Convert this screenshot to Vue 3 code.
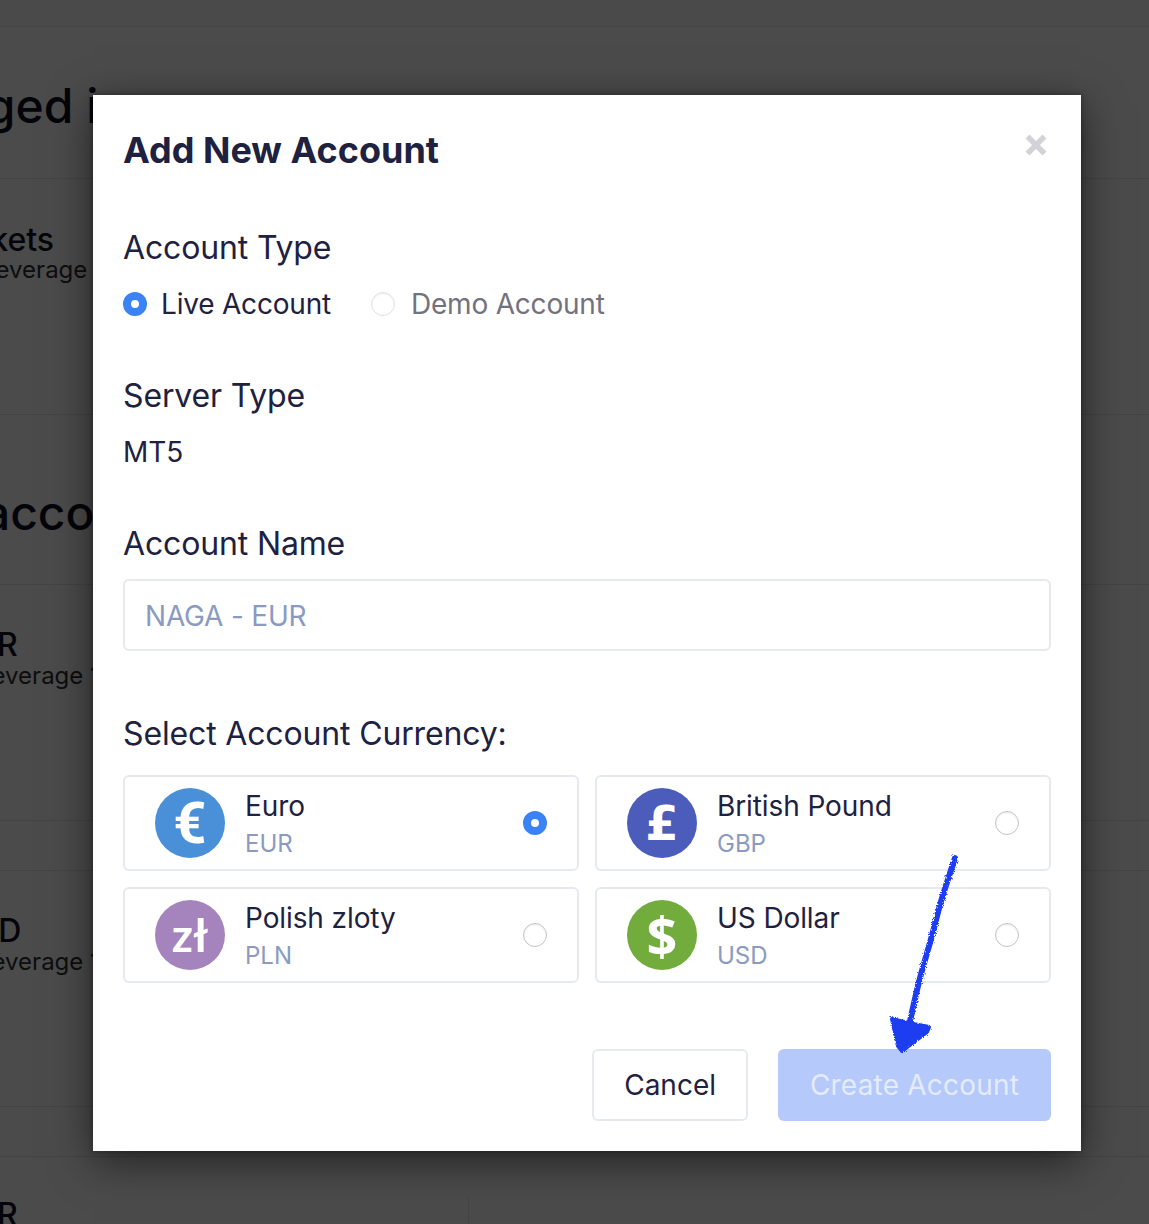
<script setup>
const currencies = [
  { name: "Euro", code: "EUR", symbol: "€", color: "#4a90d9", cls: "sym-euro", selected: true },
  { name: "British Pound", code: "GBP", symbol: "£", color: "#4c5cba", cls: "sym-pound", selected: false },
  { name: "Polish zloty", code: "PLN", symbol: "zł", color: "#a583bd", cls: "sym-zloty", selected: false },
  { name: "US Dollar", code: "USD", symbol: "$", color: "#71ac3c", cls: "sym-dollar", selected: false },
];
</script>

<template>
  <div class="page">
    <!-- page behind the overlay -->
    <div class="bg">
      <div class="topbar"></div>
      <div class="bg-row heading-row"><span class="bg-heading heading-a">Engaged in</span></div>
      <div class="bg-row account-row first">
        <div class="bg-title title-kets">Markets</div>
        <div class="bg-sub sub-a">Leverage</div>
      </div>
      <div class="bg-row heading-row two"><span class="bg-heading heading-b">Live acco</span></div>
      <div class="bg-row account-row">
        <div class="bg-title title-r">EUR</div>
        <div class="bg-sub sub-b">Leverage 1</div>
      </div>
      <div class="bg-row spacer"></div>
      <div class="bg-row account-row">
        <div class="bg-title title-r">USD</div>
        <div class="bg-sub sub-b">Leverage 1</div>
      </div>
      <div class="bg-row spacer"></div>
      <div class="last-card">
        <div class="bg-title title-r">EUR</div>
        <div class="dots"><i></i><i></i><i></i></div>
      </div>
    </div>

    <div class="overlay"></div>

    <div class="modal">
      <div class="modal-head">
        <h2>Add New Account</h2>
        <svg class="close" width="22" height="22" viewBox="0 0 22 22">
          <path d="M2.5 2.5l17 17M19.5 2.5l-17 17" stroke="#d2d2d8" stroke-width="5.5" fill="none" />
        </svg>
      </div>

      <div class="label type-label">Account Type</div>
      <div class="radios">
        <label class="radio-item">
          <span class="radio on"></span>
          <span>Live Account</span>
        </label>
        <label class="radio-item demo">
          <span class="radio off faint"></span>
          <span>Demo Account</span>
        </label>
      </div>

      <div class="label server-label">Server Type</div>
      <div class="server-value">MT5</div>

      <div class="label name-label">Account Name</div>
      <div class="input">NAGA - EUR</div>

      <div class="label currency-label">Select Account Currency:</div>
      <div class="currency-grid">
        <div v-for="c in currencies" :key="c.code" class="currency">
          <span class="coin" :class="c.cls" :style="{ background: c.color }">{{ c.symbol }}</span>
          <div class="currency-text">
            <div class="currency-name">{{ c.name }}</div>
            <div class="currency-code">{{ c.code }}</div>
          </div>
          <span class="radio" :class="c.selected ? 'on' : 'off'"></span>
        </div>
      </div>

      <div class="actions">
        <button class="btn cancel">Cancel</button>
        <button class="btn create">Create Account</button>
      </div>
    </div>

    <!-- hand drawn arrow on top of the screenshot -->
    <svg class="scribble" width="110" height="220" viewBox="0 0 110 220">
      <defs>
        <filter id="rough" x="-20%" y="-20%" width="140%" height="140%">
          <feTurbulence type="fractalNoise" baseFrequency="0.9" numOctaves="2" seed="4" />
          <feDisplacementMap in="SourceGraphic" scale="3.5" />
        </filter>
      </defs>
      <g filter="url(#rough)" fill="#1b3cf2" stroke="#1b3cf2" stroke-linejoin="round" stroke-linecap="round">
        <path d="M75 8C68 30 62 45 56 70C50 95 42 118 37 140C33 158 30 170 27 186" fill="none" stroke-width="6" />
        <path d="M12 169L28 173L49 177L47 182L22 201L18 196Z" stroke-width="4" />
      </g>
    </svg>
  </div>
</template>

<style>
html,
body {
  margin: 0;
  background: #4f4f4f;
}
</style>

<style scoped>
.page {
  position: relative;
  width: 1149px;
  height: 1224px;
  overflow: hidden;
  font-family: Inter, "Liberation Sans", sans-serif;
  color: #1e2140;
}

.bg {
  background: #f3f3f3;
  height: 100%;
  color: #0f1120;
}

.topbar {
  height: 26px;
  background: #edeff3;
  border-bottom: 1px solid #dadbdd;
}

.bg-row {
  border-bottom: 1px solid #dadbdd;
  overflow: hidden;
  white-space: nowrap;
}

.heading-row {
  height: 151px;
}

.heading-row.two {
  height: 169px;
}

.account-row {
  height: 235px;
}

.spacer {
  height: 49px;
}

.bg-heading {
  display: block;
  font-size: 48px;
  font-weight: 500;
  line-height: 56px;
}

.heading-a {
  margin: 51px 0 0 -129px;
}

.heading-b {
  margin: 70px 0 0 -124px;
}

.bg-title {
  font-size: 32px;
  font-weight: 500;
  line-height: 36px;
}

.bg-sub {
  font-size: 24px;
  line-height: 30px;
  color: #2e2e32;
}

.title-kets {
  margin: 43px 0 0 -70px;
}

.sub-a {
  margin: -3px 0 0 -18px;
}

.title-r {
  margin: 42px 0 0 -46px;
}

.sub-b {
  margin: -2px 0 0 -22px;
}

.last-card {
  position: relative;
  width: 468px;
  height: 68px;
  border-right: 1px solid #dadbdd;
  white-space: nowrap;
}

.last-card .title-r {
  margin-top: 40px;
}

.dots {
  position: absolute;
  left: 359px;
  top: 61px;
  display: flex;
  gap: 3px;
}

.dots i {
  width: 7px;
  height: 7px;
  border-radius: 50%;
  background: #2c3050;
}

.overlay {
  position: absolute;
  inset: 0;
  background: rgba(0, 0, 0, 0.69);
}

.modal {
  position: absolute;
  left: 93px;
  top: 95px;
  width: 988px;
  height: 1056px;
  box-sizing: border-box;
  padding: 0 30px 30px;
  background: #fff;
  box-shadow:
    0 10px 40px rgba(0, 0, 0, 0.55),
    0 0 6px rgba(0, 0, 0, 0.35);
}

.modal-head {
  display: flex;
  justify-content: space-between;
  height: 110px;
}

h2 {
  margin: 33px 0 0;
  font-size: 36px;
  line-height: 44px;
  font-weight: 700;
}

.close {
  margin: 39px 4px 0 0;
}

.label {
  font-size: 32px;
  letter-spacing: -0.15px;
  line-height: 36px;
}

.type-label {
  margin-top: 25px;
}

.radios {
  display: flex;
  gap: 40px;
  margin-top: 20px;
  font-size: 28px;
  letter-spacing: -0.2px;
  line-height: 36px;
}

.radio-item {
  display: flex;
  align-items: center;
  gap: 14px;
}

.demo {
  gap: 16px;
  color: #72727f;
}

.radio {
  flex: none;
  box-sizing: border-box;
  display: block;
  width: 24px;
  height: 24px;
  border-radius: 50%;
}

.radio.on {
  border: 8px solid #3b82f6;
  background: #fff;
}

.radio.off {
  border: 1px solid #c4c4c8;
  box-shadow: inset 0 1px 2px rgba(0, 0, 0, 0.08);
}

.radio.off.faint {
  border-color: #e2e2e5;
}

.server-label {
  margin-top: 56px;
}

.server-value {
  margin-top: 20px;
  font-size: 28px;
  line-height: 36px;
}

.name-label {
  margin-top: 56px;
}

.input {
  margin-top: 17px;
  box-sizing: border-box;
  height: 72px;
  padding-left: 20px;
  border: 2px solid #e6e9ee;
  border-radius: 6px;
  color: #8a9ac2;
  font-size: 28px;
  letter-spacing: -0.2px;
  line-height: 70px;
}

.currency-label {
  margin-top: 65px;
}

.currency-grid {
  margin-top: 23px;
  display: grid;
  grid-template-columns: 456px 456px;
  column-gap: 16px;
  row-gap: 16px;
}

.currency {
  box-sizing: border-box;
  height: 96px;
  padding: 0 30px;
  display: flex;
  align-items: center;
  border: 2px solid #e6e9ee;
  border-radius: 6px;
}

.coin {
  flex: none;
  width: 70px;
  height: 70px;
  border-radius: 50%;
  color: #fff;
  display: flex;
  align-items: center;
  justify-content: center;
  font-weight: 700;
  line-height: 1;
}

.sym-euro {
  font-size: 58px;
  font-family: Roboto, sans-serif;
}

.sym-pound {
  font-size: 48px;
  font-family: "DejaVu Sans", sans-serif;
}

.sym-zloty {
  font-size: 46px;
  font-weight: 700;
  font-family: Lato, sans-serif;
}

.sym-dollar {
  font-size: 54px;
  font-weight: 700;
  font-family: "Open Sans", sans-serif;
}

.currency-text {
  flex: 1;
  margin-left: 20px;
}

.currency-name {
  font-size: 28px;
  letter-spacing: -0.1px;
  line-height: 36px;
}

.currency-code {
  margin-top: 5px;
  color: #8a9ac2;
  font-size: 24px;
  line-height: 30px;
}

.actions {
  margin-top: 66px;
  display: flex;
  justify-content: flex-end;
  gap: 30px;
}

.btn {
  box-sizing: border-box;
  height: 72px;
  padding: 0 30px;
  border-radius: 6px;
  font-family: inherit;
  font-size: 28px;
}

.cancel {
  background: #fff;
  border: 2px solid #e6e9ee;
  color: #1e2140;
}

.create {
  width: 273px;
  padding: 0;
  background: #b5c9fb;
  border: none;
  color: #e4ebfe;
  letter-spacing: 0.2px;
}

.scribble {
  position: absolute;
  left: 880px;
  top: 850px;
}
</style>
